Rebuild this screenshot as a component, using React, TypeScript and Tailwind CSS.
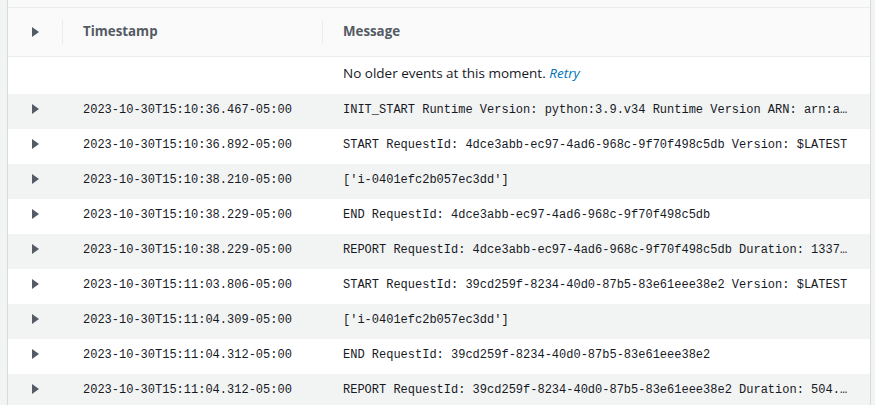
const EVENTS = [
  { ts: "2023-10-30T15:10:36.467-05:00", msg: "INIT_START Runtime Version: python:3.9.v34 Runtime Version ARN: arn:aws:lambda:us-east-2::runtime:edb5a058bfa782cb9cedc6d534ac8b8c193bc28e9a9879d9f5ebaaf619cd0fc0" },
  { ts: "2023-10-30T15:10:36.892-05:00", msg: "START RequestId: 4dce3abb-ec97-4ad6-968c-9f70f498c5db Version: $LATEST" },
  { ts: "2023-10-30T15:10:38.210-05:00", msg: "['i-0401efc2b057ec3dd']" },
  { ts: "2023-10-30T15:10:38.229-05:00", msg: "END RequestId: 4dce3abb-ec97-4ad6-968c-9f70f498c5db" },
  { ts: "2023-10-30T15:10:38.229-05:00", msg: "REPORT RequestId: 4dce3abb-ec97-4ad6-968c-9f70f498c5db Duration: 1337.45 ms Billed Duration: 1338 ms Memory Size: 128 MB" },
  { ts: "2023-10-30T15:11:03.806-05:00", msg: "START RequestId: 39cd259f-8234-40d0-87b5-83e61eee38e2 Version: $LATEST" },
  { ts: "2023-10-30T15:11:04.309-05:00", msg: "['i-0401efc2b057ec3dd']" },
  { ts: "2023-10-30T15:11:04.312-05:00", msg: "END RequestId: 39cd259f-8234-40d0-87b5-83e61eee38e2" },
  { ts: "2023-10-30T15:11:04.312-05:00", msg: "REPORT RequestId: 39cd259f-8234-40d0-87b5-83e61eee38e2 Duration: 504.12 ms Billed Duration: 505 ms Memory Size: 128 MB" },
];

function Caret() {
  return (
    <svg width="7" height="10" viewBox="0 0 7 10" className="block">
      <path d="M0 0L7 5L0 10Z" fill="#545b64" />
    </svg>
  );
}

export default function App() {
  return (
    <div className="h-[405px] w-[875px] overflow-hidden bg-[#f2f3f3] pl-[7px] pr-[4px] font-['Open_Sans',sans-serif]">
      <div className="border-x border-[#d5dbdb] bg-white">
        <div className="h-[8px] border-b border-[#eaeded] bg-[#fafafa]" />
        <div className="grid h-[49px] grid-cols-[54px_260px_1fr] items-center border-b border-[#eaeded] bg-[#fafafa] text-[13.3px] font-bold text-[#545b64]">
          <div className="pl-[24px]"><Caret /></div>
          <div className="flex h-[24px] items-center border-l border-[#eaeded] pb-[1px] pl-[20px]">Timestamp</div>
          <div className="flex h-[24px] items-center border-l border-[#eaeded] pb-[1px] pl-[20px]">Message</div>
        </div>
        <div className="grid h-[37px] grid-cols-[54px_260px_1fr] items-center pb-[4px] text-[13.5px] text-[#16191f]">
          <div />
          <div />
          <div className="pl-[21px]">
            No older events at this moment. <span className="italic text-[#0073bb]">Retry</span>
          </div>
        </div>
        {EVENTS.map((e, i) => (
          <div key={i} className={`grid h-[35px] grid-cols-[54px_260px_1fr] pt-[6px] font-['Liberation_Mono',monospace] text-[12px] leading-[20px] text-[#16191f] ${i % 2 === 0 ? "bg-[#f2f3f3]" : "bg-white"}`}>
            <div className="pl-[24px] pt-[4px]"><Caret /></div>
            <div className="pl-[21px]">{e.ts}</div>
            <div className="truncate pl-[21px] pr-[20px]">{e.msg}</div>
          </div>
        ))}
      </div>
    </div>
  );
}
